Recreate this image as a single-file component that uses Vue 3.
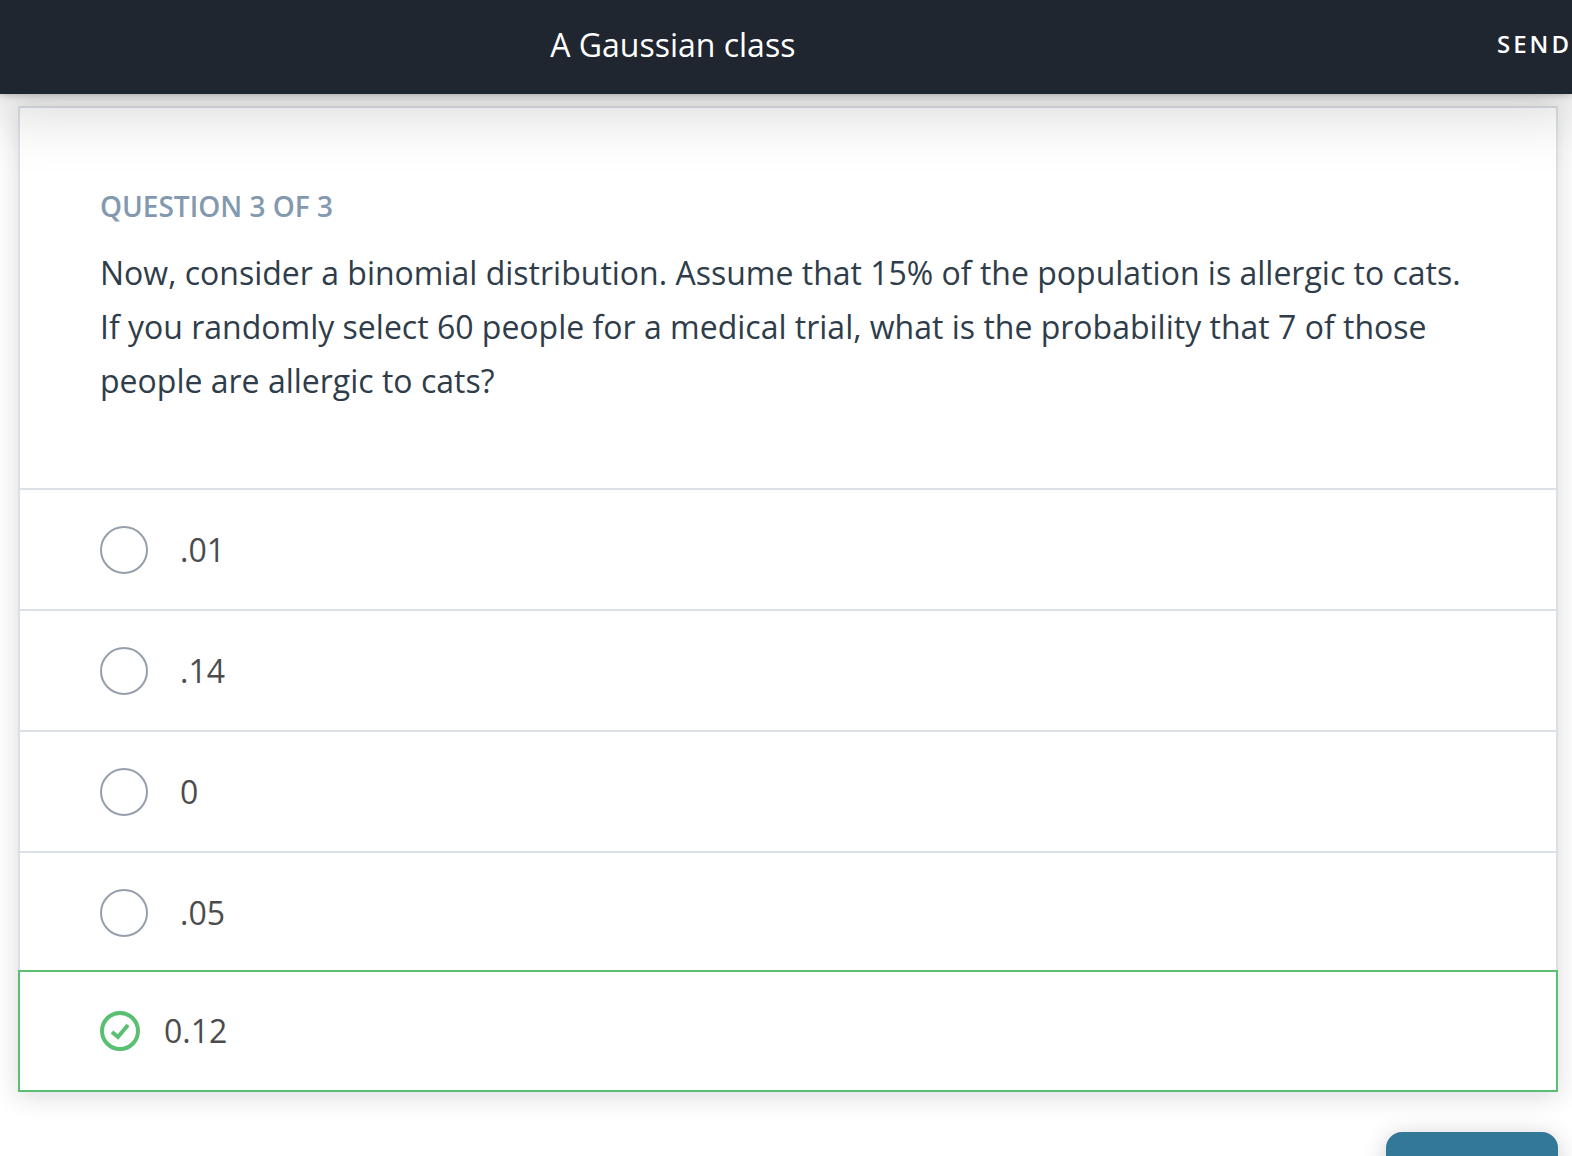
<script setup>
import { ref } from 'vue'

const options = ['.01', '.14', '0', '.05', '0.12']
const selected = ref('0.12')
</script>

<template>
  <div class="page">
    <header class="topbar">
      <h1 class="title">A Gaussian class</h1>
      <button class="send" type="button">SEND</button>
    </header>

    <main class="content">
      <form class="card" @submit.prevent>
        <section class="question">
          <h2 class="step">QUESTION 3 OF 3</h2>
          <p id="prompt" class="prompt">
            Now, consider a binomial distribution. Assume that 15% of the population is allergic to cats.
            If you randomly select 60 people for a medical trial, what is the probability that 7 of those
            people are allergic to cats?
          </p>
        </section>

        <div class="options" role="radiogroup" aria-labelledby="prompt">
          <label
            v-for="option in options"
            :key="option"
            class="option"
            :class="{ correct: option === selected }"
          >
            <input v-model="selected" class="radio" type="radio" name="answer" :value="option" />
            <svg v-if="option === selected" class="check" viewBox="0 0 40 40" aria-hidden="true">
              <circle cx="20" cy="20" r="18" />
              <path d="M12 21 L18 26 L28 14" />
            </svg>
            <span>{{ option }}</span>
          </label>
        </div>
      </form>

      <div class="actions">
        <button class="next" type="button" aria-label="Next"></button>
      </div>
    </main>
  </div>
</template>

<style>
body {
  margin: 0;
  background: #fff;
}
</style>

<style scoped>
.page {
  height: 100vh;
  overflow: hidden;
  font-family: 'Open Sans', 'Noto Sans', sans-serif;
  background: #fff;
}

.topbar {
  position: relative;
  z-index: 1;
  display: flex;
  align-items: center;
  justify-content: space-between;
  box-sizing: border-box;
  height: 94px;
  padding: 0 0 4px 35%;
  background: #1f262f;
  color: #fff;
  box-shadow: 0 0 8px rgba(0, 0, 0, 0.3), 0 0 64px 16px rgba(0, 0, 0, 0.17);
}

.title {
  margin: 0;
  font-size: 32px;
  line-height: 44px;
  font-weight: 400;
}

.send {
  padding: 0 0 2px;
  border: 0;
  background: none;
  color: inherit;
  font: 600 24px/32px 'Open Sans', 'Noto Sans', sans-serif;
  letter-spacing: 3px;
}

.content {
  padding: 12px 14px 0 18px;
}

.card {
  border: 2px solid #dbe0e6;
  border-bottom: 0;
  background: #fff;
  box-shadow: 0 4px 24px rgba(20, 25, 35, 0.16);
}

.question {
  padding: 78px 80px 80px;
}

.step {
  margin: 0 0 20px;
  font-size: 28px;
  line-height: 40px;
  font-weight: 600;
  color: #8399af;
}

.prompt {
  margin: 0;
  font-size: 32px;
  line-height: 54px;
  color: #2f3d4a;
}

.option {
  display: flex;
  align-items: center;
  gap: 32px;
  box-sizing: border-box;
  height: 121px;
  padding: 0 80px;
  border-top: 2px solid #dbe0e6;
  font-size: 32px;
  line-height: 44px;
  color: #4c4c4e;
}

.option.correct {
  position: relative;
  gap: 24px;
  height: 122px;
  margin: -2px -2px 0;
  border: 2px solid #5abf73;
  background: #fff;
}

.radio {
  appearance: none;
  box-sizing: border-box;
  width: 48px;
  height: 48px;
  margin: 0;
  border: 2px solid #959fac;
  border-radius: 50%;
}

.correct .radio {
  position: absolute;
  width: 40px;
  height: 40px;
  opacity: 0;
}

.check {
  width: 40px;
  height: 40px;
  fill: none;
  stroke: #5abf73;
  stroke-width: 4;
}

.actions {
  display: flex;
  justify-content: flex-end;
  padding-top: 40px;
}

.next {
  width: 172px;
  height: 80px;
  border: 0;
  border-radius: 16px;
  background: #347899;
  box-shadow: 0 4px 24px rgba(0, 0, 0, 0.2);
}
</style>
